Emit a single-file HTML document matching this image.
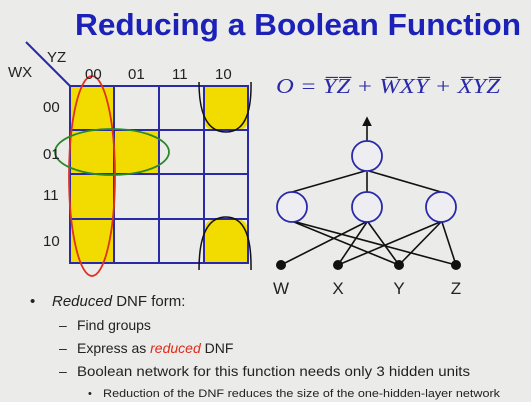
<!DOCTYPE html>
<html><head><style>
body{margin:0;width:531px;height:402px;background:#ebebea;overflow:hidden;font-family:"Liberation Sans",sans-serif}
</style></head><body>
<svg width="531" height="402" xmlns="http://www.w3.org/2000/svg" style="position:absolute;left:0;top:0">
<defs><marker id="ah" markerWidth="6" markerHeight="6" refX="5" refY="3" orient="auto"><path d="M0,0 L6,3 L0,6 z" fill="#111"/></marker></defs>
<text x="298" y="35" text-anchor="middle" font-size="31" font-weight="bold" fill="#1c22b8" textLength="446" lengthAdjust="spacingAndGlyphs">Reducing a Boolean Function</text>
<!-- K-map fills -->
<rect x="70" y="86" width="44" height="177" fill="#f2dc00"/>
<rect x="114" y="130" width="45" height="44" fill="#f2dc00"/>
<path d="M204,86 H248 V120 Q248,130 235,131 H217 Q204,130 204,120 Z" fill="#f2dc00"/>
<path d="M204,263 H248 V232 Q248,219 235,219 H217 Q204,219 204,232 Z" fill="#f2dc00"/>
<g stroke="#2a2aa8" stroke-width="2" fill="none">
<rect x="70" y="86" width="178" height="177"/>
<line x1="114" y1="86" x2="114" y2="263"/><line x1="159" y1="86" x2="159" y2="263"/><line x1="204" y1="86" x2="204" y2="263"/>
<line x1="70" y1="130" x2="248" y2="130"/><line x1="70" y1="174" x2="248" y2="174"/><line x1="70" y1="219" x2="248" y2="219"/>
<line x1="26" y1="42" x2="70" y2="86"/>
</g>
<ellipse cx="92" cy="176" rx="23" ry="100" fill="none" stroke="#e03020" stroke-width="1.8"/>
<ellipse cx="112" cy="152" rx="57" ry="23" fill="none" stroke="#2a8a2a" stroke-width="1.8"/>
<path d="M199,82 Q199,132 226,132 Q252,132 251,82" fill="none" stroke="#111" stroke-width="1.5"/>
<path d="M199,270 Q199,217 226,217 Q252,217 251,270" fill="none" stroke="#111" stroke-width="1.5"/>
<g font-size="15" fill="#222">
<text x="8" y="77">WX</text><text x="47" y="62">YZ</text>
<text x="85" y="79">00</text><text x="128" y="79">01</text><text x="172" y="79">11</text><text x="215" y="79">10</text>
<text x="43" y="112">00</text><text x="43" y="159">01</text><text x="43" y="200">11</text><text x="43" y="246">10</text>
</g>
<text x="276" y="93" font-family="Liberation Serif,serif" font-style="italic" font-size="21" fill="#2a2aa8" textLength="224" lengthAdjust="spacingAndGlyphs">O = Y̅Z̅ + W̅XY̅ + X̅YZ̅</text>
<!-- network -->
<g stroke="#111" stroke-width="1.6">
<line x1="367" y1="141" x2="367" y2="118" marker-end="url(#ah)"/>
<line x1="292" y1="192" x2="365" y2="171"/><line x1="367" y1="192" x2="367" y2="172"/><line x1="441" y1="192" x2="369" y2="171"/>
<line x1="399" y1="265" x2="294" y2="222"/><line x1="456" y1="265" x2="296" y2="222"/>
<line x1="281" y1="265" x2="366" y2="222"/><line x1="338" y1="265" x2="367" y2="222"/><line x1="399" y1="265" x2="368" y2="222"/>
<line x1="338" y1="265" x2="440" y2="222"/><line x1="399" y1="265" x2="441" y2="222"/><line x1="456" y1="265" x2="442" y2="222"/>
</g>
<g fill="#eeeef2" stroke="#2a2aa8" stroke-width="1.8">
<circle cx="367" cy="156" r="15"/><circle cx="292" cy="207" r="15"/><circle cx="367" cy="207" r="15"/><circle cx="441" cy="207" r="15"/>
</g>
<g fill="#111"><circle cx="281" cy="265" r="5"/><circle cx="338" cy="265" r="5"/><circle cx="399" cy="265" r="5"/><circle cx="456" cy="265" r="5"/></g>
<g font-size="17" fill="#222" text-anchor="middle">
<text x="281" y="294">W</text><text x="338" y="294">X</text><text x="399" y="294">Y</text><text x="456" y="294">Z</text>
</g>
<g fill="#222">
<text x="30" y="306" font-size="15">•</text>
<text x="52" y="306" font-size="15"><tspan font-style="italic">Reduced</tspan> DNF form:</text>
<text x="59" y="330" font-size="14">–</text><text x="77" y="330" font-size="14">Find groups</text>
<text x="59" y="353" font-size="14">–</text><text x="77" y="353" font-size="14">Express as <tspan fill="#e02a1a" font-style="italic">reduced</tspan> DNF</text>
<text x="59" y="376" font-size="14">–</text><text x="77" y="376" font-size="14" textLength="393" lengthAdjust="spacingAndGlyphs">Boolean network for this function needs only 3 hidden units</text>
<text x="88" y="397" font-size="11">•</text><text x="103" y="397" font-size="11" textLength="397" lengthAdjust="spacingAndGlyphs">Reduction of the DNF reduces the size of the one-hidden-layer network</text>
</g>
</svg>
</body></html>
